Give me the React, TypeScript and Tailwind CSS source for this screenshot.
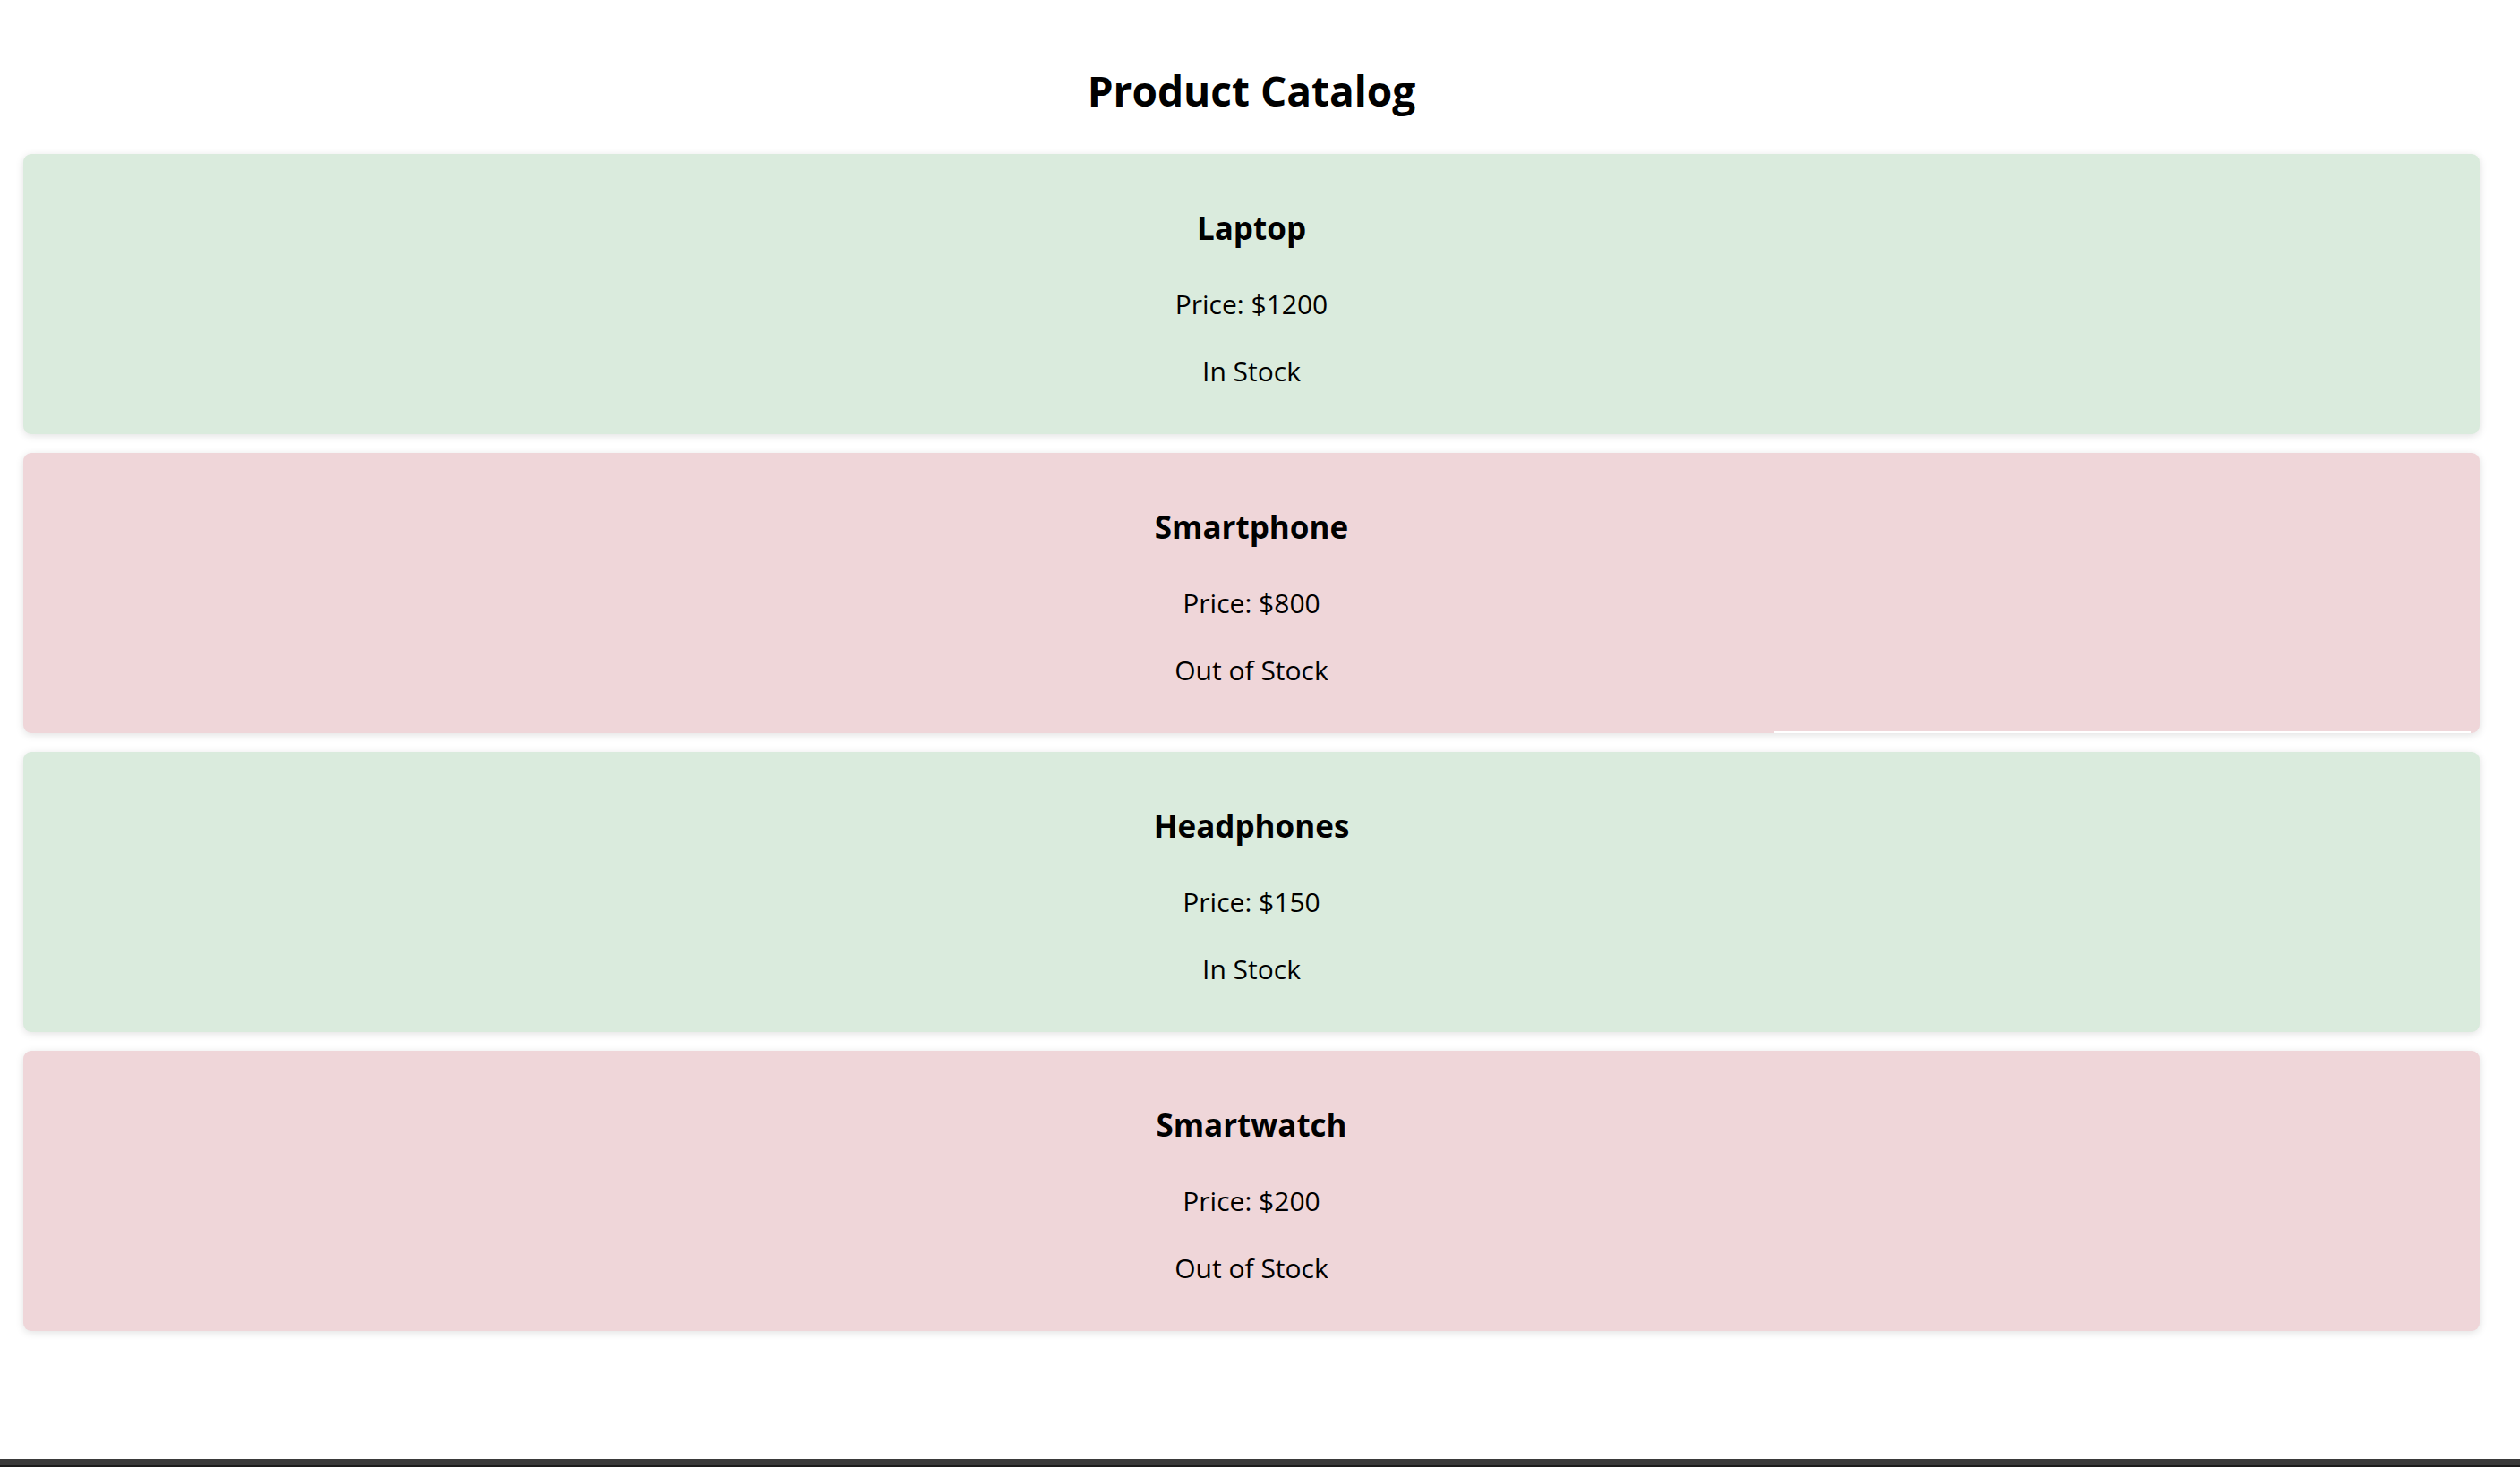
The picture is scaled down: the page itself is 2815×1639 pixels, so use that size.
type Product = {
  name: string;
  price: number;
  inStock: boolean;
};

const products: Product[] = [
  { name: "Laptop", price: 1200, inStock: true },
  { name: "Smartphone", price: 800, inStock: false },
  { name: "Headphones", price: 150, inStock: true },
  { name: "Smartwatch", price: 200, inStock: false },
];

function ProductCard({ product, glitch }: { product: Product; glitch?: boolean }) {
  return (
    <div
      className={`
        relative h-[313px] rounded-[9px] pt-[59px] text-center text-black
        shadow-[0_2px_10px_rgba(0,0,0,0.12)]
        ${product.inStock ? "bg-[#daebdd]" : "bg-[#efd6d9]"}
      `}
    >
      <h3 className="text-[35px] font-bold leading-[48px]">{product.name}</h3>
      <p className="mt-[41px] text-[30px] leading-[40px]">Price: ${product.price}</p>
      <p className="mt-[35px] text-[30px] leading-[40px]">
        {product.inStock ? "In Stock" : "Out of Stock"}
      </p>
      {/* thin render seam seen at the bottom of the second card */}
      {glitch && (
        <span className="absolute bottom-0 left-[1956px] h-[2px] w-[778px] bg-white" />
      )}
    </div>
  );
}

export default function App() {
  return (
    <div
      className="flex h-[1639px] flex-col bg-white"
      style={{ fontFamily: '"Open Sans", "Noto Sans", sans-serif' }}
    >
      <main className="flex-1 pl-[26px] pr-[45px] pt-[67px]">
        <h1 className="text-center text-[46px] font-bold leading-[68px] text-black">
          Product Catalog
        </h1>
        <div className="mt-[37px] flex flex-col gap-[21px]">
          {products.map((p, idx) => (
            <ProductCard key={idx} product={p} glitch={idx === 1} />
          ))}
        </div>
      </main>
      <div className="h-[9px] border-b-2 border-[#1c1c1c] bg-[#3a3a3a]" />
    </div>
  );
}
